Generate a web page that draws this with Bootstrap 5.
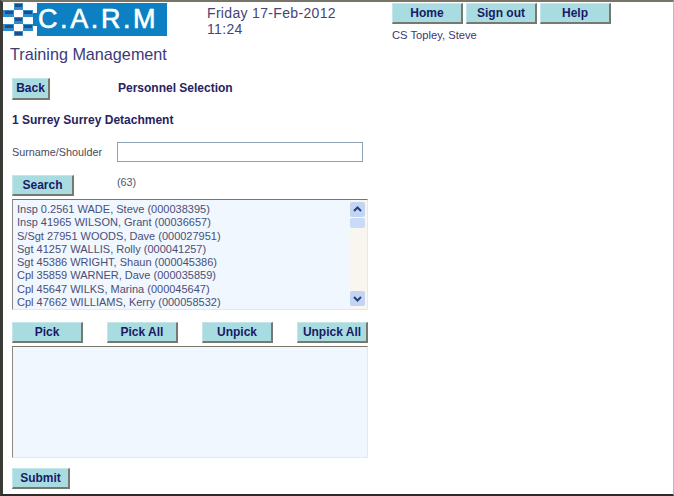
<!DOCTYPE html>
<html lang="en">
<head>
<meta charset="utf-8">
<title>Personnel Selection</title>
<link href="https://cdn.jsdelivr.net/npm/bootstrap@5.3.0/dist/css/bootstrap.min.css" rel="stylesheet">
<style>
html,body{height:100%;margin:0;background:#fff}
body{font-family:"Liberation Sans",Arial,sans-serif;color:#35316b;font-size:12px;line-height:1.2}
.frame{width:674px;height:496px;border-style:solid;border-color:#777468 #bdbdb5 #2c2c2c #3a3a36;border-width:2px 1px 2px 3px;overflow:hidden}
.head{height:40px}
.logo{width:164px;height:33px;margin-top:1px;background:#0c80c2;color:#fff;overflow:hidden}
.logo svg{flex:none;display:block}
.logo span{font-size:27px;font-weight:400;letter-spacing:2.6px;line-height:33px;margin-left:1px;-webkit-text-stroke:.6px #fff;white-space:nowrap}
.clock{width:185px;margin-left:40px;padding-top:3px;font-size:14px;line-height:16px;letter-spacing:.33px;white-space:pre-line;color:#46437a}
.who{font-size:11.2px;margin-top:5px;color:#3e3670}
.legacy{background:#a9dce1;border:0;border-top:1px solid #c4e6ea;border-left:1px solid #c4e6ea;border-right:2px solid #77786f;border-bottom:2px solid #77786f;border-radius:0;color:#191a66;font-weight:700;font-size:12px;padding:0;line-height:1;height:21px;font-family:inherit}
.legacy:hover{background:#a9dce1;color:#191a66}
.nav-w{width:71px}
.topnav{gap:3px;margin-top:1px}
.ttl{font-size:16.2px;line-height:20px;margin:2px 0 0 7px;color:#3d3a77}
.r-back{margin:13px 0 0 9px;height:23px}
.r-back .legacy{width:38px;height:22px}
.pers{margin-left:68px;font-weight:700;font-size:12px;color:#28225f}
.det{margin:13px 0 0 9px;font-weight:700;font-size:12px;color:#28225f;height:15px}
.r-name{margin:14px 0 0 9px;height:20px}
.r-name label{width:105px;font-size:10.8px;color:#4a4a5a}
.txt{width:246px;height:20px;border:1px solid #8fa2b4;border-radius:0;padding:0 3px;background:#fff}
.r-search{margin:12px 0 0 9px;height:22px}
.r-search .legacy{width:62px;height:21px}
.cnt{margin-left:43px;margin-top:-6px;font-size:10.8px;color:#55556b}
.box{width:356px;margin-left:9px;background:#f0f7fe;border-style:solid;border-width:1px;border-color:#77746a #e8e8e2 #e8e8e2 #8a8a80}
.lst{height:111px;margin-top:3px}
.rows{padding:3px 0 0 4px;font-size:11px;line-height:13.3px;color:#4b4f78;white-space:nowrap;overflow:hidden}
.sbar{width:18px;background:#f8f6ee;padding:2px 0 3px}
.sb{height:15px;width:15px;background:#c3d5f5;border-radius:2px;margin-left:1px}
.sb svg{display:block}
.sthumb{height:10px;background:#c9dbf6;margin-top:1px}
.picks{width:356px;margin:12px 0 0 9px}
.picks .legacy{height:21px;width:71px}
.picked{height:112px;margin-top:3px}
.r-sub{margin:10px 0 0 9px}
.r-sub .legacy{width:58px;height:21px}
</style>
</head>
<body>
<div class="frame">
  <div class="head d-flex">
    <div class="logo d-flex align-items-center">
      <svg width="34" height="33" viewBox="0 0 34 33" aria-hidden="true">
        <rect width="34" height="33" fill="#fff"/>
        <g fill="#2f8cc9">
          <rect x="11" y="0" width="9" height="7"/>
          <rect x="0" y="7" width="11" height="7"/><rect x="20" y="7" width="10" height="7"/>
          <rect x="11" y="14" width="9" height="7"/>
          <rect x="0" y="21" width="11" height="7"/><rect x="20" y="21" width="10" height="7"/>
          <rect x="11" y="28" width="9" height="5"/>
        </g>
        <g fill="#1b4f8f">
          <rect x="12" y="1" width="7" height="3"/>
          <rect x="2" y="8" width="8" height="3"/><rect x="21" y="8" width="8" height="3"/>
          <rect x="12" y="15" width="7" height="3"/>
          <rect x="2" y="22" width="8" height="3"/><rect x="21" y="22" width="8" height="3"/>
          <rect x="12" y="29" width="7" height="3"/>
        </g>
        <rect x="30" y="10" width="4" height="13" fill="#0c80c2"/>
      </svg>
      <span>C.A.R.M</span>
    </div>
    <div class="clock">Friday 17-Feb-2012
11:24</div>
    <div>
      <div class="d-flex topnav">
        <button class="btn legacy nav-w" type="button">Home</button>
        <button class="btn legacy nav-w" type="button">Sign out</button>
        <button class="btn legacy nav-w" type="button">Help</button>
      </div>
      <div class="who">CS Topley, Steve</div>
    </div>
  </div>
  <div class="ttl">Training Management</div>
  <div class="r-back d-flex align-items-center">
    <button class="btn legacy" type="button">Back</button>
    <div class="pers">Personnel Selection</div>
  </div>
  <div class="det">1 Surrey Surrey Detachment</div>
  <div class="r-name d-flex align-items-center">
    <label for="sn">Surname/Shoulder</label>
    <input id="sn" class="txt" type="text">
  </div>
  <div class="r-search d-flex align-items-center">
    <button class="btn legacy" type="button">Search</button>
    <div class="cnt">(63)</div>
  </div>
  <div class="box lst d-flex justify-content-between">
    <div class="rows">
      <div>Insp 0.2561 WADE, Steve (000038395)</div>
      <div>Insp 41965 WILSON, Grant (00036657)</div>
      <div>S/Sgt 27951 WOODS, Dave (000027951)</div>
      <div>Sgt 41257 WALLIS, Rolly (000041257)</div>
      <div>Sgt 45386 WRIGHT, Shaun (000045386)</div>
      <div>Cpl 35859 WARNER, Dave (000035859)</div>
      <div>Cpl 45647 WILKS, Marina (000045647)</div>
      <div>Cpl 47662 WILLIAMS, Kerry (000058532)</div>
    </div>
    <div class="sbar d-flex flex-column">
      <div class="sb"><svg width="15" height="15" viewBox="0 0 15 15"><path d="M4 9l3.5-3.5L11 9" fill="none" stroke="#2a3f78" stroke-width="2"/></svg></div>
      <div class="sb sthumb"></div>
      <div class="sb mt-auto"><svg width="15" height="15" viewBox="0 0 15 15"><path d="M4 6l3.5 3.5L11 6" fill="none" stroke="#2a3f78" stroke-width="2"/></svg></div>
    </div>
  </div>
  <div class="picks d-flex justify-content-between">
    <button class="btn legacy" type="button">Pick</button>
    <button class="btn legacy" type="button">Pick All</button>
    <button class="btn legacy" type="button">Unpick</button>
    <button class="btn legacy" type="button">Unpick All</button>
  </div>
  <div class="box picked"></div>
  <div class="r-sub"><button class="btn legacy" type="button">Submit</button></div>
</div>
</body>
</html>
